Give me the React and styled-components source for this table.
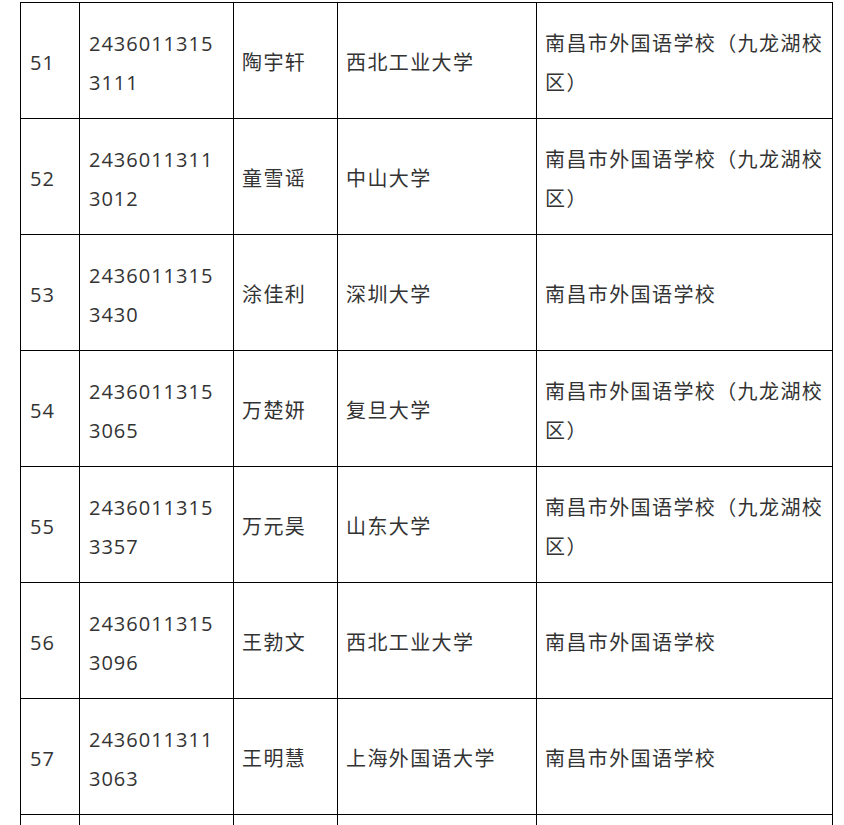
import React from "react";
import styled, { createGlobalStyle } from "styled-components";

const Global = createGlobalStyle`
  html, body { margin: 0; padding: 0; background: #fff; }
  body { font-family: "Open Sans", "Noto Sans CJK SC", sans-serif; }
`;

const Page = styled.div`
  padding: 2px 12px 0 20px;
  overflow: hidden;
  height: 825px;
  box-sizing: border-box;
`;

const Table = styled.table`
  border-collapse: collapse;
  table-layout: fixed;
  width: 812px;
  color: #333;
  font-family: "Open Sans", "Noto Sans CJK SC", sans-serif;
  font-size: 20px;
  letter-spacing: 1px;
  line-height: 39px;
`;

const Cell = styled.td`
  border: 1px solid #000;
  padding: 4px 8px 0 ${(p) => (p.$cjk ? 8 : 9)}px;
  height: 111px;
  vertical-align: middle;
  letter-spacing: ${(p) => (p.$cjk ? "1.4px" : "1px")};
  word-break: ${(p) => (p.$break ? "break-all" : "normal")};
`;

const Row = styled.tr`
  height: 116px;
`;

const widths = [59, 154, 104, 199, 296];

const rows = [
  ["51", "24360113153111", "陶宇轩", "西北工业大学", "南昌市外国语学校（九龙湖校区）"],
  ["52", "24360113113012", "童雪谣", "中山大学", "南昌市外国语学校（九龙湖校区）"],
  ["53", "24360113153430", "涂佳利", "深圳大学", "南昌市外国语学校"],
  ["54", "24360113153065", "万楚妍", "复旦大学", "南昌市外国语学校（九龙湖校区）"],
  ["55", "24360113153357", "万元昊", "山东大学", "南昌市外国语学校（九龙湖校区）"],
  ["56", "24360113153096", "王勃文", "西北工业大学", "南昌市外国语学校"],
  ["57", "24360113113063", "王明慧", "上海外国语大学", "南昌市外国语学校"],
  ["", "", "", "", ""],
];

export default function App() {
  return (
    <Page>
      <Global />
      <Table>
        <colgroup>
          {widths.map((w, i) => (
            <col key={i} style={{ width: w }} />
          ))}
        </colgroup>
        <tbody>
          {rows.map((r, i) => (
            <Row key={i}>
              {r.map((c, j) => (
                <Cell key={j} $break={j === 1} $cjk={j >= 2}>
                  {c}
                </Cell>
              ))}
            </Row>
          ))}
        </tbody>
      </Table>
    </Page>
  );
}
